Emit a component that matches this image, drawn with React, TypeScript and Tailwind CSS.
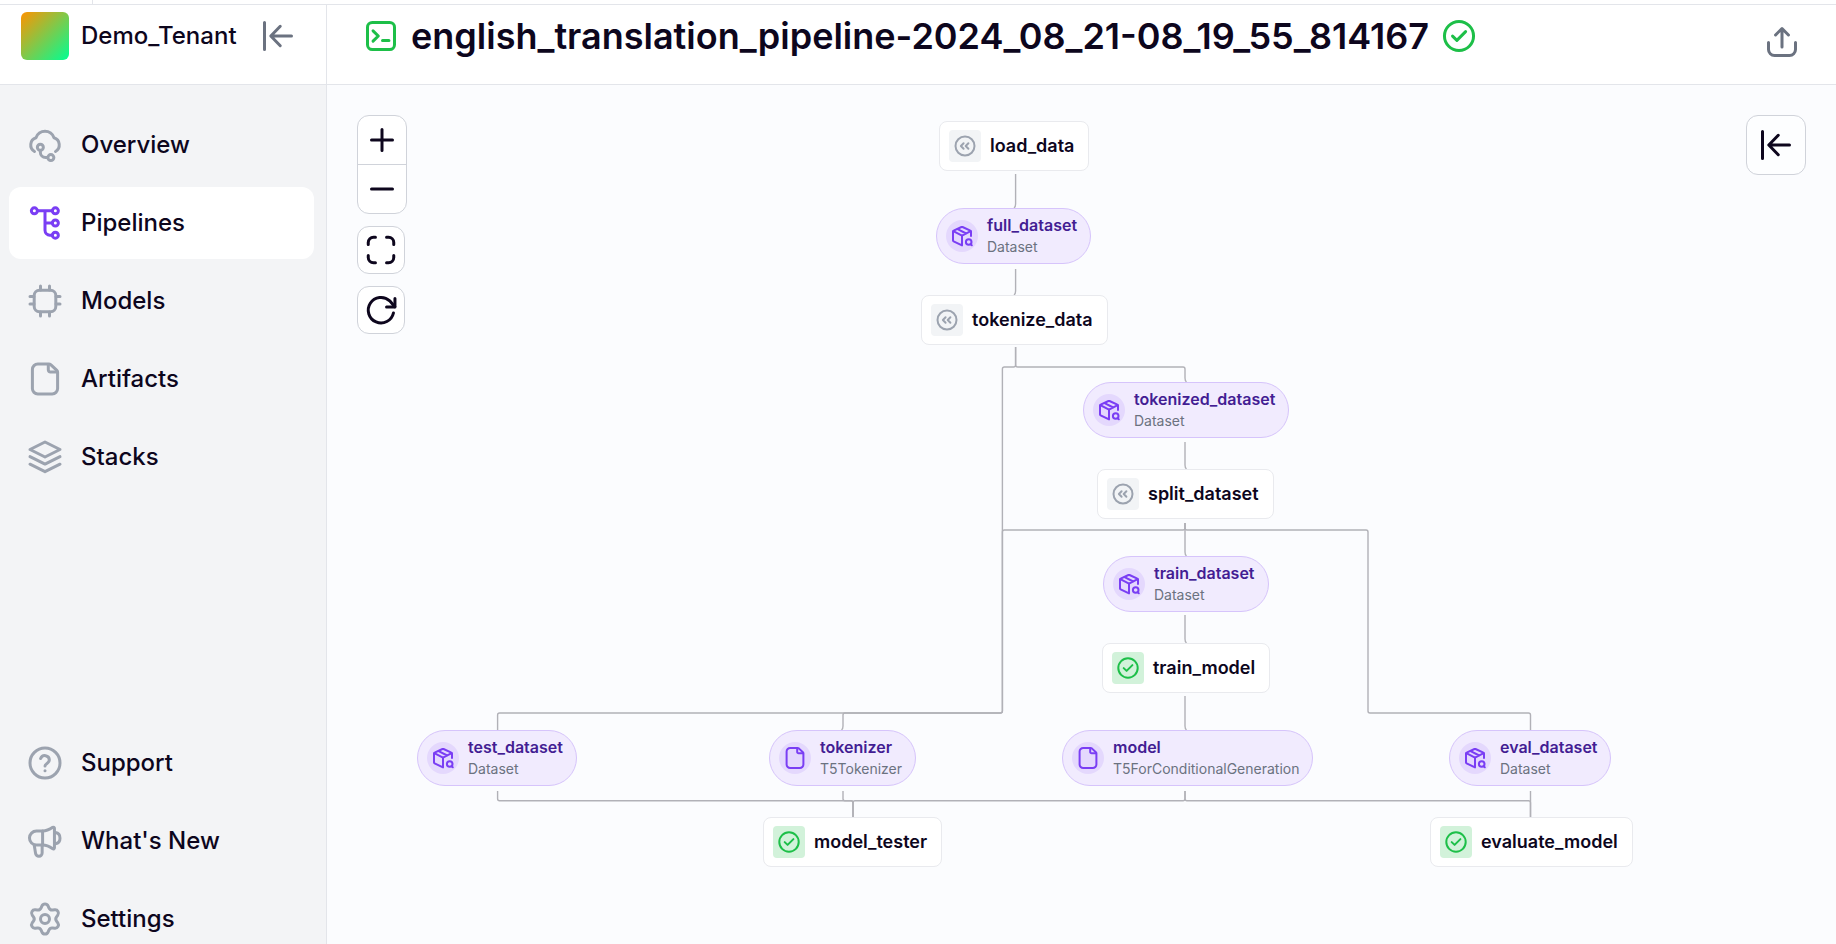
import type { ReactNode } from "react";

type IconProps = { className?: string; children?: ReactNode };

function Icon({ className = "size-9", children }: IconProps) {
  return (
    <svg
      viewBox="0 0 24 24"
      fill="none"
      stroke="currentColor"
      strokeWidth={2}
      strokeLinecap="round"
      strokeLinejoin="round"
      aria-hidden="true"
      className={`shrink-0 ${className}`}
    >
      {children}
    </svg>
  );
}

const CloudIcon = () => (
  <Icon>
    <path d="M5 16.3A5 5 0 0 1 6 7.2A6.3 6.3 0 0 1 18 7.2A5 5 0 0 1 19 16.3" />
    <circle cx="8.9" cy="13.5" r="2" />
    <circle cx="15.9" cy="20.4" r="2" />
    <path d="M8.9 15.6v1.3a3.5 3.5 0 0 0 3.5 3.5h1.4" />
  </Icon>
);

const PipelineIcon = () => (
  <Icon>
    <circle cx="4.9" cy="3.9" r="2" />
    <circle cx="18.9" cy="3.9" r="2" />
    <circle cx="18.9" cy="12" r="2" />
    <circle cx="18.9" cy="20.1" r="2" />
    <path d="M7 3.9h9.8M12 3.9v13a3.2 3.2 0 0 0 3.2 3.2h1.6M12 12h4.8" />
  </Icon>
);

const ChipIcon = () => (
  <Icon>
    <rect x="4.8" y="4.8" width="14.4" height="14.4" rx="3.5" />
    <path d="M9 2v2.6M15 2v2.6M9 19.4V22M15 19.4V22M2 9h2.6M2 14h2.6M19.4 9H22M19.4 14H22" />
  </Icon>
);

const FileIcon = ({ className }: { className?: string }) => (
  <Icon className={className}>
    <path d="M14.4 2H7.2A3.6 3.6 0 0 0 3.6 5.6v12.8A3.6 3.6 0 0 0 7.2 22h9.6a3.6 3.6 0 0 0 3.6-3.6V7.4a1.6 1.6 0 0 0-.5-1.1l-4.1-3.9A2 2 0 0 0 14.4 2Z" />
    <path d="M14.2 2.3v3.6a1.4 1.4 0 0 0 1.4 1.4h4.5" />
  </Icon>
);

const LayersIcon = () => (
  <Icon>
    <path d="M12 2 2 7l10 5 10-5L12 2ZM2 11.7l10 5 10-5M2 16.8l10 5 10-5" />
  </Icon>
);

const HelpIcon = () => (
  <Icon>
    <circle cx="12" cy="12" r="10" />
    <path d="M9.1 9a3 3 0 0 1 5.8 1c0 2-2.9 2.6-2.9 4" />
    <path d="M12 17.2h.01" />
  </Icon>
);

const MegaphoneIcon = () => (
  <Icon>
    <path d="M10.4 5.4H6.3a4.6 4.6 0 0 0 0 9.3h4.1Z" />
    <path d="M10.4 5.4c2.6 0 4.6-1 6.8-2.5a.7.7 0 0 1 1.1.6v13.1a.7.7 0 0 1-1.1.6c-2.2-1.5-4.2-2.5-6.8-2.5" />
    <path d="M19 6.4c1.9.3 3 1.9 3 3.7s-1.1 3.4-3 3.7" />
    <path d="M4.8 14.6l.9 5.5a2.2 2.2 0 0 0 4.4-.2v-5.2" />
  </Icon>
);

const GearIcon = () => (
  <Icon>
    <path d="M9.395 19.371 9.979 20.686a2.21 2.21 0 0 0 4.042 0l.584-1.315a2.4 2.4 0 0 1 2.473-1.423l1.431.152a2.21 2.21 0 0 0 2.019-3.502l-.847-1.164a2.43 2.43 0 0 1 .004-2.863l.847-1.164a2.21 2.21 0 0 0-2.019-3.502l-1.431.152a2.4 2.4 0 0 1-2.473-1.428l-.588-1.315a2.21 2.21 0 0 0-4.042 0l-.584 1.315a2.4 2.4 0 0 1-2.473 1.428l-1.431-.152a2.21 2.21 0 0 0-2.019 3.502l.847 1.164a2.43 2.43 0 0 1 0 2.863l-.847 1.164a2.21 2.21 0 0 0 2.019 3.502l1.431-.152a2.4 2.4 0 0 1 2.473 1.423Z" />
    <circle cx="12" cy="12" r="3" />
  </Icon>
);

const CollapseIcon = () => (
  <Icon>
    <path d="M3 3v18M21 12H7.4M13.5 5.5 7.2 12l6.3 6.5" />
  </Icon>
);

const TerminalIcon = () => (
  <Icon>
    <rect x="3" y="3" width="18" height="18" rx="3.2" />
    <path d="M6.7 8.6 10.2 12l-3.5 3.4M13 15h4.3" />
  </Icon>
);

const CheckCircleIcon = ({ className }: { className?: string }) => (
  <Icon className={className}>
    <circle cx="12" cy="12" r="9.7" />
    <path d="m7.7 12.1 2.9 2.8 5.8-5.8" />
  </Icon>
);

const CachedIcon = ({ className }: { className?: string }) => (
  <Icon className={className}>
    <circle cx="12" cy="12" r="9.5" />
    <path d="M10.6 9.2 7.9 12l2.7 2.8M15.4 9.2 12.7 12l2.7 2.8" />
  </Icon>
);

const UploadIcon = () => (
  <Icon>
    <path d="M3 12.3V17a4 4 0 0 0 4 4h10a4 4 0 0 0 4-4v-4.7M12 15.3V3.2M7.7 7.3 12 3l4.3 4.3" />
  </Icon>
);

const DatasetIcon = ({ className }: { className?: string }) => (
  <Icon className={className}>
    <path d="M21 12V7.6a1 1 0 0 0-.6-.9L12.5 3a1.2 1.2 0 0 0-1 0L3.6 6.7a1 1 0 0 0-.6.9v8.9a1 1 0 0 0 .6.9L12 21.4V11.7" />
    <path d="M3.3 7.2 12 11.6l8.7-4.4M7.6 5.2l8.6 4.3" />
    <path d="m20.6 20.3 1.2 1" />
    <circle cx="18.7" cy="18" r="2.8" />
  </Icon>
);

type NavEntry = { label: string; icon: ReactNode; active?: boolean };

const mainNav: NavEntry[] = [
  { label: "Overview", icon: <CloudIcon /> },
  { label: "Pipelines", icon: <PipelineIcon />, active: true },
  { label: "Models", icon: <ChipIcon /> },
  { label: "Artifacts", icon: <FileIcon /> },
  { label: "Stacks", icon: <LayersIcon /> },
];

const footerNav: NavEntry[] = [
  { label: "Support", icon: <HelpIcon /> },
  { label: "What's New", icon: <MegaphoneIcon /> },
  { label: "Settings", icon: <GearIcon /> },
];

function NavList({ items }: { items: NavEntry[] }) {
  return (
    <ul className="flex flex-col gap-1.5">
      {items.map(({ label, icon, active }) => (
        <li key={label}>
          <a
            href="#"
            aria-current={active ? "page" : undefined}
            className={`flex h-[72px] items-center gap-[18px] rounded-xl px-[18px] text-2xl font-medium ${
              active ? "bg-white" : ""
            }`}
          >
            <span className={active ? "text-[#7a3ef4]" : "text-[#9ca3af]"}>{icon}</span>
            {label}
          </a>
        </li>
      ))}
    </ul>
  );
}

type GraphNode = {
  name: string;
  x: number;
  y: number;
  status?: "cached" | "completed";
  type?: string;
};

// Positions are relative to the top-left corner of the canvas.
const nodes: GraphNode[] = [
  { name: "load_data", x: 612, y: 36, status: "cached" },
  { name: "full_dataset", x: 609, y: 123, type: "Dataset" },
  { name: "tokenize_data", x: 594, y: 210, status: "cached" },
  { name: "tokenized_dataset", x: 756, y: 297, type: "Dataset" },
  { name: "split_dataset", x: 770, y: 384, status: "cached" },
  { name: "train_dataset", x: 776, y: 471, type: "Dataset" },
  { name: "train_model", x: 775, y: 558, status: "completed" },
  { name: "test_dataset", x: 90, y: 645, type: "Dataset" },
  { name: "tokenizer", x: 442, y: 645, type: "T5Tokenizer" },
  { name: "model", x: 735, y: 645, type: "T5ForConditionalGeneration" },
  { name: "eval_dataset", x: 1122, y: 645, type: "Dataset" },
  { name: "model_tester", x: 436, y: 732, status: "completed" },
  { name: "evaluate_model", x: 1103, y: 732, status: "completed" },
];

const edges: string[] = [
  "M688.6 89V119Q688.6 122 687 123",
  "M688.6 184V206Q688.6 209 687 210",
  "M688.6 262V280Q688.6 282 690.6 282H856Q858 282 858 284V293Q858 296 859.5 297",
  "M688.6 262V280Q688.6 282 686.6 282H677.4Q675.4 282 675.4 284V626Q675.4 628 673.4 628H518Q516 628 516 630V641Q516 644 514.5 645",
  "M858 357V380Q858 383 859.5 384",
  "M858 438V467Q858 470 859.5 471",
  "M858 438V443Q858 445 856 445H677.4Q675.4 445 675.4 447V626Q675.4 628 673.4 628H172.6Q170.6 628 170.6 630V645",
  "M858 438V443Q858 445 860 445H1039Q1041 445 1041 447V626Q1041 628 1043 628H1201.5Q1203.5 628 1203.5 630V645",
  "M858 530V554Q858 557 859.5 558",
  "M858 611V641Q858 644 859.5 645",
  "M170.6 706V713.7Q170.6 715.7 172.6 715.7H524Q526 715.7 526 717.7V732",
  "M516 706V713.7Q516 715.7 518 715.7H524Q526 715.7 526 717.7V732",
  "M858 706V713.7Q858 715.7 856 715.7H528Q526 715.7 526 717.7V732",
  "M858 706V713.7Q858 715.7 860 715.7H1201.5Q1203.5 715.7 1203.5 717.7V732",
  "M1203.5 706V732",
];

function NodeCard({ node }: { node: GraphNode }) {
  if (node.type) {
    return (
      <div className="flex h-14 items-center gap-[9px] rounded-full border border-[#d6c4fb] bg-[#f1ebfe] pr-[13px] pl-[9px]">
        <span className="flex size-8 items-center justify-center rounded-full bg-[#e4d8fd] text-[#7a3ef4]">
          {node.type === "Dataset" ? (
            <DatasetIcon className="size-6" />
          ) : (
            <FileIcon className="size-6" />
          )}
        </span>
        <span className="flex flex-col">
          <span className="text-base leading-[22px] font-semibold whitespace-nowrap text-[#431d93]">
            {node.name}
          </span>
          <span className="text-sm leading-[22px] whitespace-nowrap text-[#6b7280]">{node.type}</span>
        </span>
      </div>
    );
  }
  const done = node.status === "completed";
  return (
    <div className="flex h-[50px] items-center gap-[9px] rounded-lg border border-[#e9eaee] bg-white pr-3.5 pl-[9px]">
      <span
        className={`flex size-8 items-center justify-center rounded ${
          done ? "bg-[#d2f2da] text-[#1dbf48]" : "bg-[#f2f4f6] text-[#9ca3af]"
        }`}
      >
        {done ? <CheckCircleIcon className="size-6" /> : <CachedIcon className="size-6" />}
      </span>
      <span className="text-lg leading-6 font-semibold whitespace-nowrap">{node.name}</span>
    </div>
  );
}

function Canvas() {
  return (
    <main className="relative min-h-0 min-w-0 flex-1 overflow-hidden bg-[#fbfcfe]">
      <svg
        className="absolute inset-0 size-full"
        fill="none"
        stroke="#b1b1b7"
        strokeWidth={1.4}
        aria-hidden="true"
      >
        {edges.map((d) => (
          <path key={d} d={d} />
        ))}
      </svg>
      {nodes.map((node) => (
        <div key={node.name} className="absolute" style={{ left: node.x, top: node.y }}>
          <NodeCard node={node} />
        </div>
      ))}

      <div className="absolute top-[30px] left-[30px] flex flex-col items-start gap-3">
        <div className="flex flex-col divide-y divide-[#d0d3da] overflow-hidden rounded-xl border border-[#d0d3da] bg-white">
          <button type="button" aria-label="Zoom in" className="flex h-[49px] w-12 items-center justify-center">
            <Icon>
              <path d="M12 5v14M5 12h14" />
            </Icon>
          </button>
          <button type="button" aria-label="Zoom out" className="flex h-12 w-12 items-center justify-center">
            <Icon>
              <path d="M5 12h14" />
            </Icon>
          </button>
        </div>
        <button
          type="button"
          aria-label="Fit view"
          className="flex size-12 items-center justify-center rounded-xl border border-[#d0d3da] bg-white"
        >
          <Icon>
            <path d="M3.5 8.3V7A3.5 3.5 0 0 1 7 3.5h1.3M15.7 3.5H17A3.5 3.5 0 0 1 20.5 7v1.3M20.5 15.7V17a3.5 3.5 0 0 1-3.5 3.5h-1.3M8.3 20.5H7A3.5 3.5 0 0 1 3.5 17v-1.3" />
          </Icon>
        </button>
        <button
          type="button"
          aria-label="Refresh"
          className="flex size-12 items-center justify-center rounded-xl border border-[#d0d3da] bg-white"
        >
          <Icon>
            <path d="M20.3 14A8.5 8.5 0 1 1 17.8 5.9L21.2 9.8" />
            <path d="M21.3 4.3V10h-5.6" />
          </Icon>
        </button>
      </div>

      <button
        type="button"
        aria-label="Open details panel"
        className="absolute top-[30px] right-[30px] flex size-[60px] items-center justify-center rounded-xl border border-[#d0d3da] bg-white/50"
      >
        <CollapseIcon />
      </button>
    </main>
  );
}

export default function App() {
  return (
    <div className="flex h-screen flex-col overflow-hidden bg-white font-['Inter',sans-serif] text-[#0d061d]">
      <div className="flex h-[5px] shrink-0 border-b border-[#e3e5ea]">
        <div className="w-[93px] border-r border-[#e3e5ea]" />
      </div>
      <div className="flex min-h-0 flex-1">
        <aside className="flex w-[327px] shrink-0 flex-col border-r border-[#e3e5ea] bg-[#f3f4f6]">
          <div className="h-20 shrink-0 border-b border-[#e3e5ea] bg-white">
            <div className="flex h-[62px] items-center pr-[30px] pl-[21px]">
              <span className="size-12 shrink-0 rounded-md bg-linear-to-br/srgb from-[#ff9300] to-[#00ff94]" />
              <span className="ml-3 flex-1 text-2xl font-medium">Demo_Tenant</span>
              <button type="button" aria-label="Collapse sidebar" className="text-[#6b7280]">
                <CollapseIcon />
              </button>
            </div>
          </div>
          <nav className="flex h-[calc(100vh-74px)] shrink-0 flex-col justify-between pt-6 pr-3 pl-[9px]">
            <NavList items={mainNav} />
            <NavList items={footerNav} />
          </nav>
        </aside>

        <div className="flex min-w-0 flex-1 flex-col">
          <header className="flex h-20 shrink-0 items-start justify-between border-b border-[#e3e5ea] px-9">
            <div className="flex h-[62px] min-w-0 items-center gap-3 text-[#1dbf48]">
              <TerminalIcon />
              <h1 className="text-4xl font-semibold whitespace-nowrap text-[#0d061d]">
                english_translation_pipeline-2024_08_21-08_19_55_814167
              </h1>
              <CheckCircleIcon />
            </div>
            <button
              type="button"
              aria-label="Share"
              className="flex h-[74px] shrink-0 items-center text-[#6b7280]"
            >
              <UploadIcon />
            </button>
          </header>
          <Canvas />
        </div>
      </div>
    </div>
  );
}
